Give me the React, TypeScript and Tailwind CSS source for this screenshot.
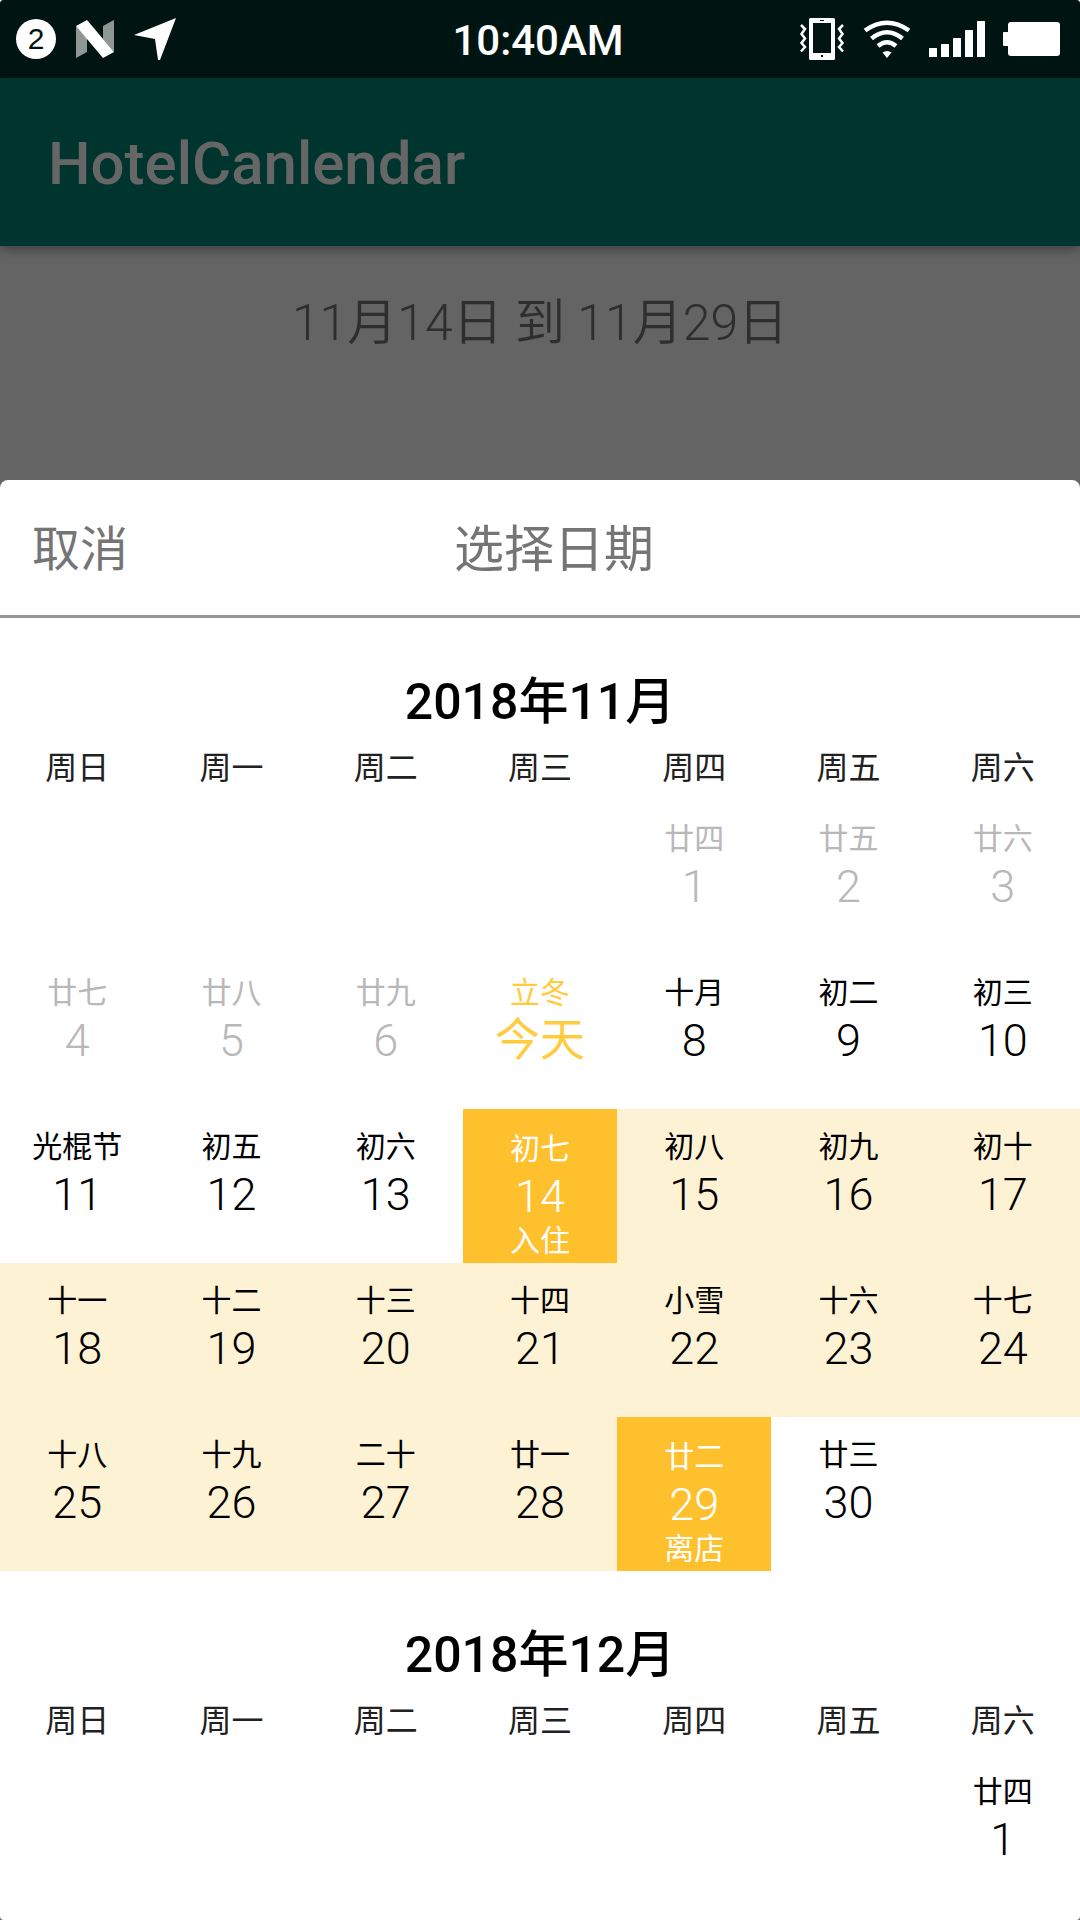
type DayState = 'past' | 'today' | 'normal' | 'range' | 'selected';

interface Day {
  label: string;
  num: string;
  state: DayState;
  note?: string;
}

const WEEKDAYS = ['周日', '周一', '周二', '周三', '周四', '周五', '周六'];

const d = (label: string, num: string, state: DayState, note?: string): Day => ({ label, num, state, note });

const NOVEMBER: (Day | null)[][] = [
  [null, null, null, null, d('廿四', '1', 'past'), d('廿五', '2', 'past'), d('廿六', '3', 'past')],
  [
    d('廿七', '4', 'past'),
    d('廿八', '5', 'past'),
    d('廿九', '6', 'past'),
    d('立冬', '今天', 'today'),
    d('十月', '8', 'normal'),
    d('初二', '9', 'normal'),
    d('初三', '10', 'normal'),
  ],
  [
    d('光棍节', '11', 'normal'),
    d('初五', '12', 'normal'),
    d('初六', '13', 'normal'),
    d('初七', '14', 'selected', '入住'),
    d('初八', '15', 'range'),
    d('初九', '16', 'range'),
    d('初十', '17', 'range'),
  ],
  [
    d('十一', '18', 'range'),
    d('十二', '19', 'range'),
    d('十三', '20', 'range'),
    d('十四', '21', 'range'),
    d('小雪', '22', 'range'),
    d('十六', '23', 'range'),
    d('十七', '24', 'range'),
  ],
  [
    d('十八', '25', 'range'),
    d('十九', '26', 'range'),
    d('二十', '27', 'range'),
    d('廿一', '28', 'range'),
    d('廿二', '29', 'selected', '离店'),
    d('廿三', '30', 'normal'),
    null,
  ],
];

const DECEMBER: (Day | null)[][] = [[null, null, null, null, null, null, d('廿四', '1', 'normal')]];

const CELL_STYLE: Record<DayState, string> = {
  past: 'pt-[17px] text-[#b8b8b8]',
  today: 'pt-[17px] text-[#ffcc3d]',
  normal: 'pt-[17px] text-black',
  range: 'pt-[17px] bg-[#fef2d5] text-black',
  selected: 'pt-[19px] bg-[#ffc02e] text-white',
};

function DayCell({ day }: { day: Day }) {
  return (
    <button
      type="button"
      disabled={day.state === 'past'}
      className={`flex h-[154px] w-full flex-col items-center whitespace-nowrap ${CELL_STYLE[day.state]}`}
    >
      <span className="text-[30px] leading-[42px]">{day.label}</span>
      <span className={`text-[45px] leading-[54px] ${day.state === 'today' ? 'font-normal' : 'font-[350]'}`}>
        {day.num}
      </span>
      {day.note && <span className="text-[30px] leading-[34px]">{day.note}</span>}
    </button>
  );
}

function Month({ title, weeks }: { title: string; weeks: (Day | null)[][] }) {
  return (
    <table className="w-full table-fixed border-collapse">
      <caption className="pt-[51px] text-[50px] leading-[66px] font-medium text-black">{title}</caption>
      <thead>
        <tr className="h-[66px]">
          {WEEKDAYS.map((w) => (
            <th key={w} scope="col" className="p-0 text-center align-middle text-[32px] leading-[40px] font-normal text-[#212121]">
              {w}
            </th>
          ))}
        </tr>
      </thead>
      <tbody>
        {weeks.map((week, i) => (
          <tr key={i}>
            {week.map((day, j) => (
              <td key={j} className="h-[154px] p-0">
                {day && <DayCell day={day} />}
              </td>
            ))}
          </tr>
        ))}
      </tbody>
    </table>
  );
}

function NougatIcon() {
  return (
    <svg width="38" height="38" viewBox="0 0 38 38" aria-hidden="true">
      <path d="M0 6 L11 18 V32 L0 38 Z M27 6 L38 0 V32 L27 19 Z" fill="#8f9795" />
      <path d="M0 6 L11 0 L38 32 L27 38 Z" fill="#fff" />
    </svg>
  );
}

function LocationIcon() {
  return (
    <svg width="42" height="42" viewBox="0 0 42 42" aria-hidden="true">
      <path d="M0 17 L42 0 L26 42 H24 L21 21 Z" fill="#fff" />
    </svg>
  );
}

function VibrateIcon() {
  return (
    <svg width="46" height="42" viewBox="0 0 46 42" aria-hidden="true">
      <path
        fill="#fff"
        fillRule="evenodd"
        d="M11.500 0 H34.500 Q36 0 36 1.500 V40.500 Q36 42 34.500 42 H11.500 Q10 42 10 40.500 V1.500 Q10 0 11.500 0 Z M14 5 V35 H32 V5 Z M21 2 V3 H25 V2 Z M22 37 V39 H24 V37 Z"
      />
      <path
        d="M2 7 L6 11 L2.500 16 L6 20.500 L2.500 25 L6 29 L2 33.500 M44 7 L40 11 L43.500 16 L40 20.500 L43.500 25 L40 29 L44 33.500"
        fill="none"
        stroke="#fff"
        strokeWidth="2.500"
      />
    </svg>
  );
}

function WifiIcon() {
  return (
    <svg width="48" height="38" viewBox="0 0 48 38" aria-hidden="true">
      <g fill="none" stroke="#fff" strokeWidth="4.500">
        <path d="M2 10.500 Q24 -5 46 10.500" />
        <path d="M8.500 18.500 Q24 6 39.500 18.500" />
        <path d="M15 26 Q24 18.500 33 26" />
      </g>
      <path d="M24 38 L19.500 32.500 Q24 29.500 28.500 32.500 Z" fill="#fff" />
    </svg>
  );
}

function SignalIcon() {
  return (
    <svg width="56" height="36" viewBox="0 0 56 36" fill="#fff" aria-hidden="true">
      <rect x="0" y="27" width="8" height="9" rx="0.500" />
      <rect x="12" y="23" width="8" height="13" rx="0.500" />
      <rect x="24" y="17" width="8" height="19" rx="0.500" />
      <rect x="36" y="9" width="8" height="27" rx="0.500" />
      <rect x="48" y="0" width="8" height="36" rx="0.500" />
    </svg>
  );
}

function BatteryIcon() {
  return (
    <svg width="57" height="34" viewBox="0 0 57 34" fill="#fff" aria-hidden="true">
      <rect x="5" y="0" width="52" height="34" rx="3" />
      <rect x="0" y="10" width="8" height="14" rx="1" />
    </svg>
  );
}

export default function App() {
  return (
    <div className="bg-white font-['Roboto','Noto_Sans_CJK_SC',sans-serif]">
      <div className="flex min-h-screen flex-col overflow-hidden rounded-t-[4px] bg-[#646464]">
        <div className="grid h-[78px] grid-cols-3 items-center bg-[#001411] pr-5 pl-4 text-white">
          <div className="flex items-center gap-5">
            <span className="flex size-10 items-center justify-center rounded-full bg-white font-['Liberation_Sans',sans-serif] text-[30px] leading-[40px] text-[#001411]">
              2
            </span>
            <NougatIcon />
            <LocationIcon />
          </div>
          <span className="pt-1 text-center text-[42px] leading-[50px] font-medium">10:40AM</span>
          <div className="flex items-center justify-end gap-[18px]">
            <VibrateIcon />
            <WifiIcon />
            <SignalIcon />
            <BatteryIcon />
          </div>
        </div>

        <header className="flex h-[168px] items-center bg-[#00352f] px-12 pt-1 shadow-[0_3px_12px_rgba(0,0,0,0.4)]">
          <h1 className="text-[60px] leading-[72px] font-medium text-[#666666]">HotelCanlendar</h1>
        </header>

        <p className="h-[234px] pt-11 text-center text-[50px] leading-[66px] font-[350] text-[#2e2e2e]">
          11月14日 到 11月29日
        </p>

        <section aria-labelledby="sheet-title" className="flex-1 overflow-hidden rounded-t-lg rounded-b-[4px] bg-white">
          <div className="flex h-[138px] items-center border-b-[3px] border-[#979797] pt-1 text-[#757575]">
            <button type="button" className="pl-8 text-[48px] leading-[64px]">
              取消
            </button>
            <h2 id="sheet-title" className="flex-1 pr-[100px] text-center text-[50px] leading-[64px]">
              选择日期
            </h2>
          </div>
          <Month title="2018年11月" weeks={NOVEMBER} />
          <Month title="2018年12月" weeks={DECEMBER} />
        </section>
      </div>
    </div>
  );
}
